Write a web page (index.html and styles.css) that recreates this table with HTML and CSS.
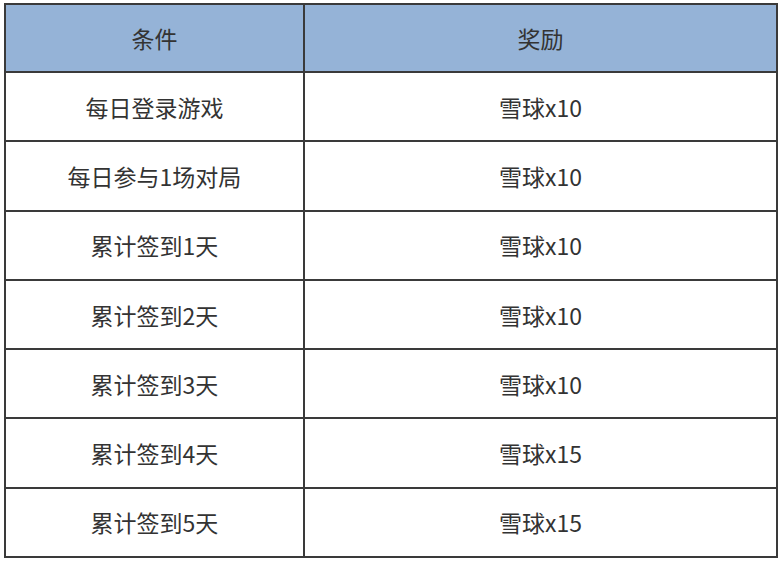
FILE: index.html
```html
<!DOCTYPE html>
<html lang="zh">
<head>
<meta charset="utf-8">
<link rel="stylesheet" href="styles.css">
</head>
<body>
<table class="reward-table">
  <thead>
    <tr><th class="col-cond">条件</th><th>奖励</th></tr>
  </thead>
  <tbody>
    <tr><td>每日登录游戏</td><td>雪球x10</td></tr>
    <tr><td>每日参与1场对局</td><td>雪球x10</td></tr>
    <tr><td>累计签到1天</td><td>雪球x10</td></tr>
    <tr><td>累计签到2天</td><td>雪球x10</td></tr>
    <tr><td>累计签到3天</td><td>雪球x10</td></tr>
    <tr><td>累计签到4天</td><td>雪球x15</td></tr>
    <tr><td>累计签到5天</td><td>雪球x15</td></tr>
  </tbody>
</table>
</body>
</html>
```
FILE: styles.css
```css
html, body {
  margin: 0;
  padding: 0;
  background: #ffffff;
}
body {
  padding: 3px 0 0 4px;
  font-family: "Noto Sans CJK SC", "Noto Sans", sans-serif;
  color: #333333;
}
.reward-table {
  border-collapse: collapse;
  width: 774px;
  table-layout: fixed;
}
.reward-table th,
.reward-table td {
  border: 2px solid #3a3a3a;
  height: 67.3px;
  padding: 0;
  text-align: center;
  vertical-align: middle;
  font-size: 23px;
  font-weight: normal;
}
.reward-table th {
  background: #95b3d7;
  height: 66px;
}
.col-cond {
  width: 297px;
}
```
